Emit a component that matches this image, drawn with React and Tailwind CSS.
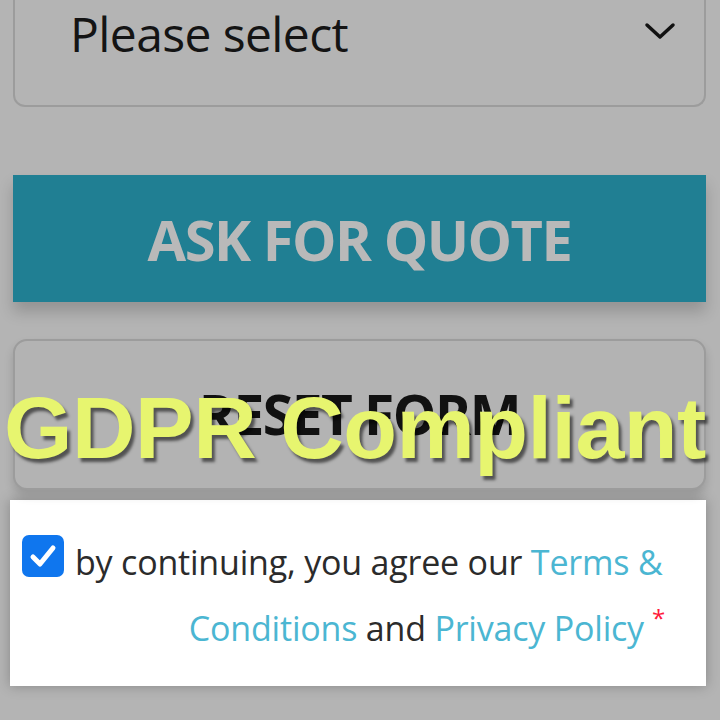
import React from "react";

export default function App() {
  const open = { fontFamily: '"Open Sans", "Noto Sans", sans-serif' };
  return (
    <div className="relative w-[720px] h-[720px] overflow-hidden bg-[#b4b4b4]">
      <div className="flex flex-col px-[13px] pr-[14px]">
        {/* select */}
        <div className="h-[107px] rounded-b-[12px] border-2 border-t-0 border-[#9c9c9c] flex items-start justify-between pl-[55px] pr-[28px] pt-[1px]">
          <span style={open} className="text-[48px] leading-[66px] text-[#141414] tracking-[-0.6px]">Please select</span>
          <svg width="32" height="20" viewBox="0 0 32 20" className="mt-[20px]">
            <path d="M3 4 L16 16 L29 4" fill="none" stroke="#111" strokeWidth="3.5" strokeLinecap="round" strokeLinejoin="round" />
          </svg>
        </div>
        {/* ask */}
        <div className="mt-[68px] h-[127px] bg-[#207f93] flex items-center justify-center shadow-[0_10px_14px_rgba(0,0,0,0.18)]">
          <span style={open} className="text-[56px] font-bold text-[#b9b9b9] tracking-[-1.5px]">ASK FOR QUOTE</span>
        </div>
        {/* reset */}
        <div className="mt-[37px] h-[151px] rounded-[14px] border-2 border-[#9c9c9c] bg-[#b3b3b3] flex items-center justify-center shadow-[0_6px_10px_rgba(0,0,0,0.15)]">
          <span style={open} className="text-[55px] font-bold text-[#111] tracking-[-1.5px]">RESET FORM</span>
        </div>
      </div>
      {/* consent */}
      <div className="mt-[10px] ml-[10px] w-[696px] h-[186px] bg-white shadow-[0_0_12px_rgba(0,0,0,0.25)] flex items-start pl-[12px] pt-[35px]">
        <div className="w-[42px] h-[42px] rounded-[7px] bg-[#0f76ee] flex items-center justify-center shrink-0">
          <svg width="28" height="24" viewBox="0 0 28 24">
            <path d="M4 13 L11 20 L24 4" fill="none" stroke="white" strokeWidth="5" strokeLinecap="round" strokeLinejoin="round" />
          </svg>
        </div>
        <div style={open} className="ml-[11px] w-[592px] text-[34px] leading-[66px] text-[#2b2b2b] mt-[-6px] tracking-[-0.2px]">
          <div className="whitespace-nowrap">by continuing, you agree our <span className="text-[#4bb6d2]">Terms &amp;</span></div>
          <div className="text-right whitespace-nowrap pr-[2px]">
            <span className="text-[#4bb6d2]">Conditions</span> and <span className="text-[#4bb6d2]">Privacy Policy</span>
            <span className="relative top-[-14px] ml-[8px] text-[24px] text-[#ff1a3a]">*</span>
          </div>
        </div>
      </div>
      {/* overlay */}
      <div
        className="absolute left-[4px] top-[362px] text-[88px] font-bold text-[#e7f56f] tracking-[-0.5px] whitespace-nowrap [text-shadow:3px_4px_3px_rgba(0,0,0,0.55)]"
        style={{ fontFamily: '"Liberation Sans", Arial, sans-serif' }}
      >
        GDPR Compliant
      </div>
    </div>
  );
}
